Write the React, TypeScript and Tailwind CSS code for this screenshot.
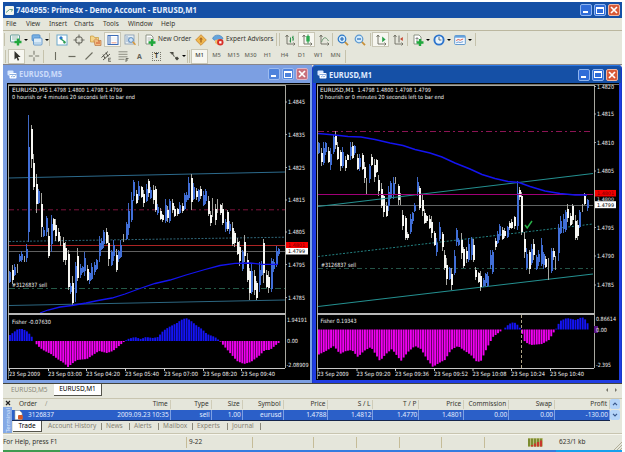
import type { ReactNode } from "react";

type Point = [number, number];
// x, high, low, kind: w = white body, b = blue body, g = wick only
type Bar = [number, number, number, "w" | "b" | "g"];

const M5_BARS: Bar[] = [
  [9.5, 271, 283, "b"], [12, 265, 284, "w"], [14, 264, 276, "b"], [17, 264, 273, "g"], [19, 254, 262, "b"], [21.5, 251, 262, "b"],
  [24, 256, 262, "g"], [26.5, 244, 262, "b"], [28.7, 115, 242, "b"], [31.3, 125, 168, "w"], [33.5, 154, 190, "w"], [36, 174, 213, "w"],
  [38.5, 189, 204, "b"], [41, 193, 237, "w"], [43.5, 227, 237, "b"], [46, 216, 236, "b"], [48.5, 228, 258, "w"], [51, 215, 252, "b"],
  [53, 218, 231, "w"], [55.5, 219, 241, "w"], [58, 228, 242, "w"], [60.5, 236, 246, "g"], [63, 237, 262, "w"], [65.5, 242, 265, "w"],
  [68, 250, 290, "w"], [70.5, 283, 294, "b"], [72.5, 276, 305, "w"], [75, 262, 302, "b"], [77.5, 248, 281, "w"], [80, 264, 278, "b"],
  [82.3, 266, 273, "b"], [84.6, 252, 276, "b"], [87, 265, 281, "w"], [89.4, 272, 284, "b"], [91.8, 263, 280, "b"], [94.2, 262, 275, "b"],
  [96.6, 259, 270, "b"], [99, 236, 262, "b"], [101.4, 238, 250, "b"], [103.8, 230, 248, "b"], [106, 228, 244, "w"], [108.6, 235, 266, "w"],
  [111, 250, 266, "b"], [113.5, 240, 261, "b"], [116, 249, 272, "w"], [118.3, 250, 262, "b"], [120.7, 240, 258, "b"], [123.2, 234, 242, "g"],
  [126, 222, 240, "b"], [128.5, 203, 235, "b"], [131, 192, 222, "b"], [133, 180, 201, "b"], [136, 190, 204, "w"], [138.5, 181, 200, "b"],
  [141, 186, 198, "w"], [143.5, 190, 207, "w"], [146, 184, 202, "b"], [148.2, 179, 197, "w"], [150.6, 187, 199, "b"], [153, 185, 204, "w"],
  [155.3, 186, 212, "w"], [157.7, 204, 215, "b"], [160.1, 208, 220, "w"], [162.5, 214, 222, "w"], [165, 199, 223, "b"], [167.3, 206, 222, "w"],
  [169.7, 199, 223, "b"], [172.1, 199, 213, "w"], [174.5, 206, 217, "w"], [177, 208, 216, "w"], [179.5, 202, 214, "b"], [182, 203, 213, "w"],
  [184.3, 193, 210, "b"], [186.7, 192, 202, "b"], [188.9, 177, 200, "b"], [191, 174, 210, "w"], [193.5, 183, 200, "b"], [196, 188, 200, "w"],
  [198.4, 189, 202, "b"], [200.8, 186, 199, "w"], [203.2, 191, 206, "b"], [205.6, 189, 204, "b"], [208, 196, 216, "w"], [210.4, 211, 226, "w"],
  [212.8, 198, 217, "g"], [215.4, 204, 225, "w"], [217.8, 199, 213, "g"], [220.2, 204, 215, "w"], [222.6, 203, 225, "w"], [225, 219, 232, "b"],
  [227.4, 210, 231, "w"], [229.8, 221, 234, "b"], [232.2, 222, 246, "w"], [234.6, 231, 247, "w"], [237, 238, 255, "w"], [239.4, 241, 266, "w"],
  [242, 250, 271, "b"], [244.5, 235, 262, "w"], [247, 253, 282, "w"], [249.4, 268, 300, "w"], [251.8, 263, 294, "b"], [254, 270, 295, "w"],
  [256.5, 281, 300, "w"], [259, 262, 292, "b"], [261.5, 261, 276, "b"], [263.8, 239, 283, "w"], [266.3, 270, 288, "w"], [268.6, 271, 293, "w"],
  [271, 258, 292, "b"], [273.5, 259, 272, "b"], [276, 246, 267, "b"], [278.5, 248, 256, "b"],
];

const M1_BARS: Bar[] = [
  [318.4, 142, 154, "b"], [321, 148, 166, "w"], [323.4, 142, 165, "b"], [325.8, 142, 155, "b"], [328.2, 147, 163, "w"], [330.6, 148, 170, "b"],
  [333, 135, 154, "b"], [335.3, 131, 149, "w"], [337.7, 142, 160, "w"], [340, 150, 171, "w"], [342.5, 147, 168, "b"], [345, 156, 171, "w"],
  [347.5, 154, 160, "w"], [350, 142, 160, "b"], [352.4, 142, 159, "w"], [354.8, 145, 155, "b"], [357.2, 154, 170, "w"], [359.6, 154, 171, "b"],
  [362, 153, 170, "w"], [364.4, 162, 183, "w"], [366.6, 178, 194, "g"], [369.2, 164, 183, "b"], [371.5, 154, 166, "w"], [374, 159, 182, "w"],
  [376.4, 159, 173, "w"], [378.8, 175, 196, "w"], [381.2, 183, 208, "w"], [383.6, 194, 217, "w"], [386, 202, 217, "w"], [388.5, 186, 211, "b"],
  [390.9, 181, 199, "b"], [393.3, 177, 199, "b"], [395.7, 177, 184, "g"], [398.1, 184, 205, "w"], [400.5, 193, 205, "g"], [402.8, 210, 230, "w"],
  [405.2, 216, 240, "w"], [407.6, 232, 240, "w"], [410, 214, 234, "b"], [412.4, 212, 224, "b"], [414.8, 203, 212, "b"], [417.2, 177, 196, "b"],
  [419.6, 186, 210, "w"], [422, 194, 216, "w"], [424.4, 209, 224, "w"], [426.8, 215, 223, "w"], [429.2, 215, 229, "w"], [431.6, 216, 238, "w"],
  [434, 231, 246, "w"], [436.6, 238, 256, "b"], [439.5, 222, 241, "b"], [442, 232, 251, "w"], [444.4, 250, 270, "w"], [446.8, 258, 285, "w"],
  [449.2, 267, 280, "b"], [451.5, 268, 290, "w"], [454, 250, 275, "b"], [456.5, 228, 246, "b"], [458.8, 238, 246, "b"], [461.3, 233, 259, "w"],
  [463.7, 247, 268, "w"], [466.1, 247, 263, "w"], [468.5, 238, 262, "b"], [471, 237, 260, "b"], [473.4, 239, 262, "w"], [475.8, 267, 280, "w"],
  [478.2, 272, 283, "w"], [480.6, 271, 291, "w"], [483, 278, 287, "b"], [485.4, 273, 286, "b"], [487.8, 272, 287, "b"], [490.2, 250, 269, "b"],
  [492.5, 250, 274, "b"], [495, 238, 250, "w"], [497.4, 231, 244, "b"], [499.8, 224, 240, "b"], [502.2, 227, 240, "w"], [504.6, 228, 238, "w"],
  [507, 226, 238, "b"], [509.4, 221, 230, "w"], [511.8, 219, 229, "w"], [514.2, 216, 229, "w"], [517, 181, 230, "b"], [519.4, 187, 200, "w"],
  [521.7, 192, 235, "w"], [524.2, 232, 258, "w"], [526.6, 248, 270, "b"], [529, 250, 274, "w"], [531.4, 244, 265, "b"], [533.8, 239, 260, "w"],
  [536.2, 255, 270, "b"], [538.6, 250, 266, "b"], [541, 238, 266, "b"], [543.4, 252, 269, "b"], [545.8, 256, 268, "w"], [548.2, 258, 280, "g"],
  [551, 248, 273, "b"], [553.4, 248, 260, "w"], [555.8, 256, 270, "g"], [558.2, 224, 261, "b"], [560.6, 216, 234, "b"], [563, 214, 233, "b"],
  [565.4, 210, 232, "b"], [567.8, 204, 222, "w"], [570.2, 213, 226, "w"], [572.6, 204, 224, "w"], [575, 215, 240, "w"], [577.4, 220, 240, "w"],
  [579.8, 210, 228, "b"], [582.4, 204, 212, "g"], [584.6, 193, 205, "w"], [587, 199, 211, "b"],
];

function Candles({ bars }: { bars: Bar[] }) {
  return (
    <g shapeRendering="crispEdges">
      {bars.map(([x, high, low, kind], i) => {
        const len = low - high;
        const up = len * (i % 3 === 0 ? 0.1 : 0.25);
        const down = len * (i % 2 === 0 ? 0.08 : 0.22);
        const left = Math.round(x - 0.5);
        return (
          <g key={x}>
            <rect x={left} y={high} width="1" height={len} fill={kind === "b" ? "#3f68c4" : "#a6a6a0"} />
            {kind !== "g" && (
              <rect x={left} y={high + up} width="2" height={len - up - down} fill={kind === "b" ? "#416fd8" : "#f6f6f2"} />
            )}
          </g>
        );
      })}
    </g>
  );
}

function valueAt(points: Point[], x: number) {
  for (let i = 1; i < points.length; i++) {
    const [x0, y0] = points[i - 1];
    const [x1, y1] = points[i];
    if (x >= x0 && x <= x1) return y0 + ((y1 - y0) * (x - x0)) / (x1 - x0);
  }
  return null;
}

function Histogram({ points, zero, from, to }: { points: Point[]; zero: number; from: number; to: number }) {
  const bars: ReactNode[] = [];
  for (let x = from; x <= to; x += 2.42) {
    const y = valueAt(points, x);
    if (y === null || Math.abs(y - zero) < 0.5) continue;
    const up = y < zero;
    bars.push(
      <rect key={x} x={x} y={up ? y : zero} width="1.9" height={Math.abs(y - zero)} fill={up ? "#1414f5" : "#f000f0"} />,
    );
  }
  return <g>{bars}</g>;
}

function Label({ x, y, w, fill = "#f2f2f2", size = 5.7, children }: { x: number; y: number; w: number; fill?: string; size?: number; children: string }) {
  return (
    <text x={x} y={y + 2} textLength={w} lengthAdjust="spacingAndGlyphs" fill={fill} fontSize={size}>
      {children}
    </text>
  );
}

function toPath(points: Point[]) {
  return points.map((p) => p.join(",")).join(" ");
}

function Frame({ left, right, times }: { left: number; right: number; times: [number, string][] }) {
  return (
    <>
      <g shapeRendering="crispEdges">
        <path d={`M${left - 1} 379V84.5H${left + 302}`} fill="none" stroke="#77756c" />
        <path d={`M${left} 85.5H${right}V368`} fill="none" stroke="#a8a8a0" />
        <path d={`M${left - 0.5} 85V368.5`} stroke="#a8a8a0" />
        <rect x={left - 1} y="313" width={right - left + 1} height="2" fill="#b8b8b8" />
        <path d={`M${left - 1} 368.5H${right}`} stroke="#c8c8c8" />
      </g>
      {times.map(([x, label], i) => (
        <g key={label}>
          <path d={`M${x + 0.5} 368v3`} stroke="#c8c8c8" />
          <Label x={x} y={374} w={i === 0 ? 31 : 34}>{label}</Label>
        </g>
      ))}
    </>
  );
}

function PriceAxis({ x, prices }: { x: number; prices: [number, string][] }) {
  return (
    <>
      {prices.map(([y, label]) => (
        <g key={label}>
          <path d={`M${x - 3} ${y}h2`} stroke="#c8c8c8" strokeWidth="0.8" />
          <Label x={x} y={y} w={17}>{label}</Label>
        </g>
      ))}
    </>
  );
}

const M5_FISHER: Point[] = [
  [9, 335], [13, 332], [17, 329], [22, 329], [27, 332], [31, 337], [33, 341], [37, 346], [42, 350], [50, 354], [58, 360], [63, 363], [67, 367],
  [72, 363], [76, 360], [86, 359], [92, 355], [98, 351], [106, 353], [112, 351], [118, 346], [124, 341], [127, 339], [134, 337], [140, 339],
  [145, 337], [152, 338], [157, 337], [162, 331], [168, 327], [176, 323], [180, 320], [185, 318], [189, 320], [195, 325], [201, 329],
  [206, 334], [214, 337], [219, 341], [223, 346], [230, 354], [236, 361], [243, 364], [250, 362], [258, 356], [264, 350], [269, 350], [275, 345], [279, 342],
];

const M1_FISHER: Point[] = [
  [317, 355], [325, 351], [333, 346], [339, 354], [345, 351], [351, 350], [357, 357], [363, 351], [370, 347], [379, 361], [385, 354], [391, 349],
  [400, 361], [407, 352], [414, 346], [420, 349], [426, 359], [432, 367], [438, 363], [444, 360], [450, 350], [457, 346], [464, 351], [470, 355],
  [476, 362], [480, 361], [486, 348], [492, 337], [500, 331], [503, 329], [508, 324], [513, 322], [518, 326], [520, 330], [524, 342], [530, 345], [541, 344],
  [548, 340], [553, 332], [555, 329], [559, 321], [566, 318], [575, 320], [581, 317], [585, 320], [588, 326],
];

const CHART_FONT = "font-['DejaVu_Sans_Condensed','DejaVu_Sans',sans-serif]";

function M5Chart() {
  return (
    <svg viewBox="7 83 303 297" className={"block h-[297px] w-[303px] bg-black " + CHART_FONT}>
      <Label x={12} y={90} w={36}>EURUSD,M5</Label>
      <Label x={49} y={90} w={73}>1.4798 1.4800 1.4798 1.4799</Label>
      <Label x={12} y={96.5} w={123}>0 hourish or 4 minutes 20 seconds left to bar end</Label>
      <path d="M9 178L285 172" stroke="#2c6a8c" />
      <path d="M9 209.8H285" stroke="#7c123c" strokeDasharray="5 3 2 3" />
      <path d="M9 241.5L285 237.2" stroke="#2f6678" strokeDasharray="2 1.5" />
      <path d="M9 245.5H285" stroke="#ac2424" shapeRendering="crispEdges" />
      <path d="M9 251.5H285" stroke="#606060" shapeRendering="crispEdges" />
      <path d="M9 288.5H285" stroke="#245a48" strokeDasharray="6 3 2 3" />
      <path d="M9 305.5L285 300" stroke="#2c6680" />
      <Candles bars={M5_BARS} />
      <Label x={12} y={284.5} w={35}>#3126837 sell</Label>
      <polyline
        points={toPath([[40, 313], [48, 310], [60, 307], [72, 305.5], [86, 303], [98, 300.5], [112, 298], [125, 294], [140, 288.5], [155, 283.5], [170, 280], [186, 275], [205, 269.5], [220, 265.5], [235, 263.3], [250, 263], [262, 264.3], [278, 264.3]])}
        fill="none" stroke="#1414f0" strokeWidth="1.3"
      />
      <Frame
        left={9} right={285}
        times={[[9, "23 Sep 2009"], [48, "23 Sep 03:00"], [86, "23 Sep 04:20"], [125, "23 Sep 05:40"], [164, "23 Sep 07:00"], [203, "23 Sep 08:20"], [241, "23 Sep 09:40"]]}
      />
      <Label x={12} y={321.5} w={39}>Fisher -0.07630</Label>
      <Histogram points={M5_FISHER} zero={341} from={9} to={279} />
      <PriceAxis x={288} prices={[[102, "1.4845"], [134.5, "1.4835"], [167.5, "1.4825"], [200, "1.4815"], [232, "1.4805"], [264.5, "1.4795"], [297.5, "1.4785"]]} />
      <rect x="286" y="242" width="22" height="6" fill="#f40000" />
      <Label x={288} y={244.6} w={17} size={5.2} fill="#700000">1.4801</Label>
      <rect x="286" y="248" width="22" height="6.5" fill="#fff" />
      <Label x={288} y={251.2} w={17} size={5.2} fill="#000">1.4799</Label>
      <Label x={287} y={320} w={20}>1.94191</Label>
      <Label x={287} y={341} w={11}>0.00</Label>
      <Label x={286.5} y={364.5} w={22}>-2.08909</Label>
    </svg>
  );
}

function M1Chart() {
  return (
    <svg viewBox="316 83 303 297" className={"block h-[297px] w-[303px] bg-black " + CHART_FONT}>
      <Label x={320} y={90} w={34}>EURUSD,M1</Label>
      <Label x={357.5} y={90} w={73.5}>1.4798 1.4800 1.4798 1.4799</Label>
      <Label x={320} y={96.5} w={124}>0 hourish or 0 minutes 20 seconds left to bar end</Label>
      <path d="M318 131.5H593" stroke="#8c1454" strokeDasharray="6 3 2 3" />
      <path d="M318 205.5H593" stroke="#606464" shapeRendering="crispEdges" />
      <path d="M318 256.5L593 224" stroke="#238080" strokeDasharray="2 1.6" />
      <path d="M318 268.5H593" stroke="#245448" strokeDasharray="5 3 2 3" />
      <path d="M318 306.5L593 274" stroke="#249090" strokeWidth="1.1" />
      <Candles bars={M1_BARS} />
      <path d="M318 206.5L593 173.5" stroke="#249090" strokeWidth="1.1" />
      <path d="M318 194.5H593" stroke="#a00078" shapeRendering="crispEdges" />
      <Label x={321} y={264.5} w={35}>#3126837 sell</Label>
      <polyline
        points={toPath([[318, 133.5], [335, 135], [348, 136.5], [361, 137], [375, 139.5], [390, 143], [403, 145.5], [415, 149.5], [430, 153], [442, 157], [455, 163], [470, 169], [482, 174.5], [495, 178.5], [508, 181.5], [519, 182.5], [530, 186.5], [545, 191], [560, 193.5], [575, 195], [587, 195]])}
        fill="none" stroke="#1414f0" strokeWidth="1.5"
      />
      <path d="M525 225l2.2 3l4.8-7" fill="none" stroke="#28b048" strokeWidth="1.5" />
      <Frame
        left={318} right={594}
        times={[[317.5, "23 Sep 2009"], [356.5, "23 Sep 09:20"], [395, "23 Sep 09:36"], [434, "23 Sep 09:52"], [472.5, "23 Sep 10:08"], [511, "23 Sep 10:24"], [550, "23 Sep 10:40"]]}
      />
      <Label x={320.5} y={321} w={36}>Fisher 0.19343</Label>
      <Histogram points={M1_FISHER} zero={329.5} from={318} to={588} />
      <path d="M521.5 315V368" stroke="#b0a488" strokeDasharray="3 2" />
      <PriceAxis x={597} prices={[[86.5, "1.4820"], [114, "1.4815"], [142.5, "1.4810"], [171, "1.4805"], [227.5, "1.4795"], [256, "1.4790"], [285, "1.4785"]]} />
      <rect x="595" y="190" width="21" height="6.5" fill="#f40000" />
      <Label x={597} y={192.8} w={17} size={4.8} fill="#700000">1.4801</Label>
      <Label x={597} y={198.8} w={17} size={4.8}>1.4800</Label>
      <rect x="595" y="201.2" width="21" height="7" fill="#fff" />
      <Label x={597} y={204.8} w={17} size={5} fill="#000">1.4799</Label>
      <Label x={596} y={319} w={20}>0.86614</Label>
      <rect x="594" y="326" width="4" height="7" fill="#5a1480" />
      <Label x={596} y={329.5} w={11}>0.00</Label>
      <Label x={596} y={364.8} w={15}>-2.395</Label>
    </svg>
  );
}

function WindowButtons({ faded = false }: { faded?: boolean }) {
  const blue = faded ? "bg-[#4f83dc] border-[#9dbcf0]" : "bg-[#2f6cd8] border-[#8fb4ee]";
  const red = faded ? "bg-[#c8707c] border-[#dcb4c8]" : "bg-[#d85a38] border-[#f0b8a4]";
  return (
    <div className="flex gap-[2px]">
      <span className={"flex h-3 w-3 items-end rounded-[2px] border p-[2px] " + blue}>
        <span className="h-[2px] w-[5px] bg-white" />
      </span>
      <span className={"flex h-3 w-3 items-center justify-center rounded-[2px] border " + blue}>
        <span className="h-[7px] w-[8px] border border-t-2 border-white" />
      </span>
      <span className={"flex h-3 w-3 items-center justify-center rounded-[2px] border " + red}>
        <svg viewBox="0 0 8 8" className="h-2 w-2"><path d="M1 1l6 6M7 1L1 7" stroke="#fff" strokeWidth="1.7" /></svg>
      </span>
    </div>
  );
}

function ChartIcon() {
  return (
    <svg viewBox="0 0 10 9" className="h-[9px] w-[10px]">
      <rect x="0.5" y="0.5" width="6" height="5" rx="1" fill="#d8e8ff" />
      <rect x="2.5" y="3" width="7" height="5.5" rx="0.8" fill="#fff" />
      <path d="M2.5 4.5h7M4 7l1.5-1l1.5 1l1.5-1.4" fill="none" stroke="#6f9bd8" strokeWidth="0.8" />
    </svg>
  );
}

type IconName =
  | "newChart" | "profiles" | "market" | "target" | "folder" | "terminal" | "tester" | "order" | "diamond" | "expert"
  | "bars" | "candles" | "line" | "zoomIn" | "zoomOut" | "scroll" | "shift" | "indicator" | "clock" | "template"
  | "cursor" | "cross" | "vline" | "hline" | "trend" | "channel" | "fibo" | "arrows";

const SHEET = <path d="M2 1h5l2 2v7H2z" fill="#fff" stroke="#777d70" strokeWidth="0.8" />;
const AXES = <path d="M3 1v9h8M1.5 3L3 1l1.5 2M9.5 8.5L11 10l-1.5 1.5" fill="none" stroke="#6c6c60" strokeWidth="0.9" />;

const ICONS: Record<IconName, ReactNode> = {
  newChart: (
    <>
      <rect x="0.5" y="1" width="9" height="7" rx="1" fill="#f4faff" stroke="#639a96" />
      <path d="M2 5h5M2 3h6" stroke="#76a088" strokeWidth="0.7" />
      <path d="M8 4.5v7M4.5 8h7" stroke="#20a83c" strokeWidth="2.4" />
    </>
  ),
  profiles: (
    <>
      <rect x="1" y="0.8" width="8" height="6" rx="1" fill="#78b0e4" stroke="#4a88c8" strokeWidth="0.8" />
      <rect x="2.5" y="4" width="8.5" height="7" rx="1" fill="#dcecf8" stroke="#4a88c8" strokeWidth="0.8" />
      <path d="M3 9h7" stroke="#9cc0dc" />
    </>
  ),
  market: (
    <>
      <rect x="1" y="1" width="10" height="10" fill="#fff" stroke="#6ca8cc" />
      <path d="M3 4l2-2l2 2l-2 2z" fill="#2878d0" />
      <path d="M5 5l4 3" stroke="#30a060" strokeWidth="1.5" />
      <path d="M7 8l2-1l1 2l-2 .7z" fill="#2c9c50" />
    </>
  ),
  target: (
    <>
      <circle cx="6" cy="6" r="3.3" fill="none" stroke="#6d6d64" strokeWidth="1.1" />
      <path d="M6 0.5v3.7M6 7.8v3.7M0.5 6h3.7M7.8 6h3.7" stroke="#6d6d64" strokeWidth="1.1" />
    </>
  ),
  folder: (
    <>
      <path d="M0.5 2h3l1 1.5h4V8h-8z" fill="#f4d488" stroke="#c89838" strokeWidth="0.7" />
      <path d="M4 6.5l2-2l2 2h3v5H5z" fill="#f0bc80" stroke="#bc7444" strokeWidth="0.7" />
      <path d="M7 8v2M9 7v3" stroke="#d05830" />
    </>
  ),
  terminal: (
    <>
      <rect x="1" y="1.5" width="10" height="9" fill="#fff" stroke="#3c6cb8" />
      <path d="M3 2v8" stroke="#3c6cb8" />
      <path d="M4 4h6M4 6h6" stroke="#dce4ec" strokeWidth="0.7" />
      <path d="M4.5 8.8h5" stroke="#e08068" strokeWidth="0.8" />
    </>
  ),
  tester: (
    <>
      <rect x="1" y="1" width="9" height="9" fill="#e8f0f4" stroke="#8498b0" strokeWidth="0.8" />
      <path d="M3 2v6M5 3v6" stroke="#7090b8" strokeWidth="0.7" />
      <circle cx="7" cy="6" r="2.4" fill="#cfe4f8" stroke="#4c80b8" strokeWidth="0.9" />
      <path d="M8.7 7.8l2.8 3" stroke="#d89838" strokeWidth="1.6" />
    </>
  ),
  order: (
    <>
      {SHEET}
      <path d="M3.5 4h4M3.5 6h3" stroke="#8c9488" strokeWidth="0.7" />
      <path d="M8 5v7M4.5 8.5h7" stroke="#20a83c" strokeWidth="2.3" />
    </>
  ),
  diamond: (
    <>
      <path d="M6 0.7L11.3 6L6 11.3L0.7 6z" fill="#f0b850" stroke="#c8842c" strokeWidth="0.8" />
      <path d="M6 3.2L8 5.6L6.7 5.6V8.6H5.3V5.6L4 5.6z" fill="#a86820" />
    </>
  ),
  expert: (
    <>
      <path d="M0.6 4.8C1 2 4 0.8 6.5 1.2S10.8 3 11 4.8L8 6L3 6.6z" fill="#64a4dc" stroke="#3c7cb8" strokeWidth="0.6" />
      <path d="M3 6v3l3 2l2-3V5z" fill="#edbf70" />
      <circle cx="8.3" cy="8.3" r="3.2" fill="#d83028" />
      <rect x="7.2" y="7.2" width="2.3" height="2.3" fill="#fff" />
    </>
  ),
  bars: (
    <>
      {AXES}
      <path d="M6.5 3.5v5M9 1.8v5M5.5 7h1M8 3.5h1M9 5h1" stroke="#289048" />
    </>
  ),
  candles: (
    <>
      {AXES}
      <path d="M7 0.5v9" stroke="#208c40" />
      <rect x="5.3" y="2" width="3.4" height="5.5" fill="#2cac50" />
    </>
  ),
  line: (
    <>
      {AXES}
      <path d="M3.5 8c2-5 4-6 7-1" fill="none" stroke="#6a9870" />
    </>
  ),
  zoomIn: (
    <>
      <path d="M7.5 7.5l3.5 3.7" stroke="#c89038" strokeWidth="1.8" />
      <circle cx="5" cy="5" r="3.8" fill="#d4ecfc" stroke="#2c78c8" strokeWidth="1.2" />
      <path d="M5 3v4M3 5h4" stroke="#2468b8" strokeWidth="1.2" />
    </>
  ),
  zoomOut: (
    <>
      <path d="M7.5 7.5l3.5 3.7" stroke="#c89038" strokeWidth="1.8" />
      <circle cx="5" cy="5" r="3.8" fill="#d4ecfc" stroke="#5c98d0" strokeWidth="1.2" />
      <path d="M3 5h4" stroke="#2468b8" strokeWidth="1.2" />
    </>
  ),
  scroll: (
    <>
      {AXES}
      <path d="M7.2 2.6l3.4 2.8l-3.4 2.8z" fill="#28a048" />
    </>
  ),
  shift: (
    <>
      {AXES}
      <path d="M7 1.5v7" stroke="#707068" />
      <path d="M10.8 3L8 5l2.8 2z" fill="#c84830" />
    </>
  ),
  indicator: (
    <>
      {SHEET}
      <path d="M3.5 4.5h3M5 3v5" stroke="#777" strokeWidth="0.8" />
      <path d="M8 5v7M4.5 8.5h7" stroke="#20a83c" strokeWidth="2.4" />
    </>
  ),
  clock: (
    <>
      <circle cx="6" cy="6" r="4.6" fill="#e8f4fc" stroke="#2c74cc" strokeWidth="1.9" />
      <path d="M6 3v3h2.4" fill="none" stroke="#50606c" strokeWidth="0.9" />
    </>
  ),
  template: (
    <>
      <rect x="0.7" y="1.5" width="10.6" height="9" rx="0.8" fill="#f4faff" stroke="#5490cc" strokeWidth="0.9" />
      <path d="M1 2.7h10" stroke="#64a0dc" strokeWidth="2" />
      <path d="M2.2 6.5l2-1l2 .7l3-1.2" fill="none" stroke="#d04c40" strokeWidth="0.9" />
      <path d="M2.2 8.8l2-.8l2 .5l3-.8" fill="none" stroke="#4c84c8" strokeWidth="0.8" />
    </>
  ),
  cursor: <path d="M3.5 1v8.5l2-1.8l1.3 3l1.4-.6l-1.3-3h2.7z" fill="#33332e" />,
  cross: <path d="M6 0.8v4M6 7.2v4M0.8 6h4M7.2 6h4" stroke="#7c7c70" strokeWidth="1.1" />,
  vline: <path d="M6.5 2v8" stroke="#6c6c60" strokeWidth="1.1" />,
  hline: <path d="M2.5 6.5h7" stroke="#6c6c60" strokeWidth="1.2" />,
  trend: <path d="M2.5 9.5l7-7" stroke="#6c6c60" strokeWidth="1.1" />,
  channel: (
    <>
      <path d="M1.5 7.5L8 1.5M3 10l7-6M3 4.5l2 4M6 2.5l2 4" stroke="#55554c" strokeWidth="1" />
      <path d="M8.5 8.2h2.5M8.5 9.8h2M8.5 11.4h2.5M8.6 8v3.5" stroke="#55554c" strokeWidth="0.7" />
    </>
  ),
  fibo: (
    <>
      <path d="M1.5 1.8h9M1.5 4.3h9M1.5 6.8h9M1.5 9.3h6" stroke="#77776c" strokeWidth="0.8" />
      <path d="M9 12V8.5h2.5M9 10h2" fill="none" stroke="#55554c" strokeWidth="0.8" />
    </>
  ),
  arrows: (
    <>
      <path d="M1.5 2h4v3.5z" fill="#44443c" />
      <path d="M3 3l5 5" stroke="#66665c" strokeWidth="1.1" strokeDasharray="2 1" />
      <path d="M7 8.5l2-2l2 2l-2 2z" fill="#44443c" />
    </>
  ),
};

function Icon({ name }: { name: IconName }) {
  return <svg viewBox="0 0 12 12" className="h-3 w-3 shrink-0">{ICONS[name]}</svg>;
}

function Tool({ name, active = false }: { name: IconName; active?: boolean }) {
  return (
    <span className={"flex h-[15px] w-[17px] shrink-0 items-center justify-center " + (active ? "border border-[#c9c7b6] bg-[#f7f7f1]" : "")}>
      <Icon name={name} />
    </span>
  );
}

function Arrow() {
  return (
    <span className="flex w-1 shrink-0 items-center justify-center">
      <span className="border-x-2 border-t-2 border-x-transparent border-t-black" />
    </span>
  );
}

function Sep({ className }: { className: string }) {
  return <span className={"h-[13px] w-px shrink-0 bg-[#c5c2ac] " + className} />;
}

const MENU: [string, string][] = [
  ["File", "w-[20px]"], ["View", "w-[23px]"], ["Insert", "w-[25px]"], ["Charts", "w-[29px]"], ["Tools", "w-[25px]"], ["Window", "w-[33px]"], ["Help", "w-[20px]"],
];

const PERIODS = ["M1", "M5", "M15", "M30", "H1", "H4", "D1", "W1", "MN"];

const COLUMNS: [string, string, string][] = [
  ["Time", "2009.09.23 10:35", "w-[101px]"],
  ["Type", "sell", "w-[41px]"],
  ["Size", "1.00", "w-[31px]"],
  ["Symbol", "eurusd", "w-[41px]"],
  ["Price", "1.4788", "w-[45px]"],
  ["S / L", "1.4812", "w-[45px]"],
  ["T / P", "1.4770", "w-[46px]"],
  ["Price", "1.4801", "w-[45px]"],
  ["Commission", "0.00", "w-[45px]"],
  ["Swap", "0.00", "w-[46px]"],
  ["Profit", "-130.00", "w-[55px]"],
];

const TERMINAL_TABS: [string, string][] = [
  ["Account History", "w-[58px]"], ["News", "w-[28px]"], ["Alerts", "w-[29px]"], ["Mailbox", "w-[34px]"], ["Experts", "w-[35px]"], ["Journal", "w-[33px]"],
];

const STATUS_CELLS = ["w-[66px] pl-[2px]", "w-[61px]", "w-[43px]", "w-[43px]", "w-[42px]", "w-[43px]", "w-[40px]"];

export default function App() {
  return (
    <div className="h-[452px] w-[625px] overflow-hidden bg-white pl-[3px] pt-[2px] font-['Noto_Sans','Open_Sans',sans-serif] text-[6.5px] leading-none text-[#35352f]">
      <div className="flex h-[450px] w-[619px] flex-col whitespace-nowrap bg-[#e5e6db]">
        {/* Title bar */}
        <div className="flex h-4 shrink-0 items-center bg-[#1550a6] pl-[2px] pr-[2px]">
          <svg viewBox="0 0 10 9" className="h-[9px] w-[10px]">
            <rect width="9" height="9" rx="1" fill="#f4f6ee" />
            <path d="M1 6.5l3.5-3h3l-1 2" fill="none" stroke="#5d9c84" />
          </svg>
          <svg viewBox="0 0 190 16" className="ml-[1px] h-4 w-[190px] text-[8.6px] font-bold">
            <text x="0" y="11.2" textLength="181" lengthAdjust="spacingAndGlyphs" fill="#e6eefc">7404955: Prime4x - Demo Account - EURUSD,M1</text>
          </svg>
          <div className="ml-auto"><WindowButtons /></div>
        </div>

        {/* Menu */}
        <div className="flex h-3 shrink-0 items-center pl-[3px]">
          {MENU.map(([label, width]) => (
            <span key={label} className={width}>{label}</span>
          ))}
        </div>

        {/* Standard toolbar */}
        <div className="flex h-[18px] shrink-0 items-center border-t border-[#bbb79f]">
          <Sep className="ml-px mr-[2px]" />
          <Tool name="newChart" /><Arrow />
          <Tool name="profiles" /><Arrow />
          <Sep className="mr-[3px]" />
          <Tool name="market" /><Tool name="target" /><Tool name="folder" /><Tool name="terminal" active /><Tool name="tester" />
          <Sep className="mr-[2px]" />
          <Tool name="order" />
          <span className="w-[34px]">New Order</span>
          <Tool name="diamond" /><Tool name="expert" />
          <span className="w-[50px]">Expert Advisors</span>
          <Sep className="mr-[2px]" />
          <Sep className="mr-px" />
          <Tool name="bars" /><Tool name="candles" active /><Tool name="line" />
          <Sep className="mr-px" />
          <Tool name="zoomIn" /><Tool name="zoomOut" />
          <Sep className="ml-[2px] mr-px" />
          <Tool name="scroll" active /><Tool name="shift" />
          <Sep className="ml-px mr-px" />
          <Tool name="indicator" /><Arrow />
          <Tool name="clock" /><Arrow />
          <Tool name="template" /><Arrow />
          <Sep className="ml-[3px]" />
        </div>

        {/* Drawing tools and periods */}
        <div className="flex h-4 shrink-0 items-center">
          <Sep className="ml-[2px] mr-[2px]" />
          <Tool name="cursor" active /><Tool name="cross" />
          <Sep className="ml-px mr-[2px]" />
          <Tool name="vline" /><Tool name="hline" /><Tool name="trend" /><Tool name="channel" /><Tool name="fibo" />
          <span className="w-[17px] text-center text-[7px] font-bold text-[#62625a]">A</span>
          <span className="m-[4px] flex h-[9px] w-[9px] items-center justify-center border border-dotted border-[#77776c] text-[6.5px] font-bold">T</span>
          <Tool name="arrows" /><Arrow />
          <Sep className="ml-px mr-px" />
          <Sep className="mr-px" />
          {PERIODS.map((period) => (
            <span
              key={period}
              className={
                "flex h-[15px] w-[17px] items-center justify-center text-[5.8px] font-medium " +
                (period === "M1" ? "border border-[#c9c7b6] bg-[#f7f7f1] text-[#3c3c34]" : "text-[#66665c]")
              }
            >
              {period}
            </span>
          ))}
          <Sep className="ml-px" />
        </div>

        {/* Chart windows */}
        <div className="flex h-[319px] shrink-0 border-t border-[#87858a]">
          <section className="h-[318px] w-[309px] bg-[#7c9fe2] pl-[4px] pr-[2px]">
            <div className="flex h-[18px] items-center pr-[2px]">
              <ChartIcon />
              <svg viewBox="0 0 48 16" className="ml-[2px] h-4 w-12 text-[8.4px] font-bold">
                <text x="0" y="11" textLength="43" lengthAdjust="spacingAndGlyphs" fill="#ccdcfa">EURUSD,M5</text>
              </svg>
              <div className="ml-auto"><WindowButtons faded /></div>
            </div>
            <M5Chart />
          </section>
          <section className="h-[318px] w-[310px] rounded-t-[4px] border-x border-[#1738c8] bg-[#203de2] pl-[3px]">
            <div className="-ml-[3px] flex h-[18px] items-center rounded-t-[3px] border-t border-[#2d7ae6] bg-[#1550a6] pl-[4px] pr-[3px]">
              <ChartIcon />
              <svg viewBox="0 0 48 16" className="ml-[2px] h-4 w-12 text-[8.4px] font-bold">
                <text x="0" y="11" textLength="43" lengthAdjust="spacingAndGlyphs" fill="#e0ecff">EURUSD,M1</text>
              </svg>
              <div className="ml-auto"><WindowButtons /></div>
            </div>
            <M1Chart />
          </section>
        </div>

        {/* Chart tabs */}
        <div className="flex h-[15px] shrink-0 items-start border-t border-[#44443c]">
          <span className="flex h-3 w-[51px] items-center pl-[8px] text-[#8c8a7c]">EURUSD,M5</span>
          <span className="flex h-[12px] w-[48px] items-center justify-center border-b border-r border-[#55554c] bg-white text-black">EURUSD,M1</span>
          <span className="ml-auto mr-[5px] mt-[4px] flex gap-[7px]">
            <span className="border-y-2 border-r-2 border-y-transparent border-r-[#77756a]" />
            <span className="border-y-2 border-l-2 border-y-transparent border-l-[#77756a]" />
          </span>
        </div>

        {/* Terminal */}
        <div className="flex h-[36px] shrink-0 border-b border-t border-[#c8c5b0]">
          <div className="flex w-[9px] shrink-0 flex-col items-center">
            <svg viewBox="0 0 6 6" className="mt-px h-[6px] w-[6px] shrink-0"><path d="M1 1l4 4M5 1L1 5" stroke="#222" strokeWidth="1.2" /></svg>
            <div className="mt-px flex h-[26px] w-[9px] items-center justify-center bg-[#85a9e4]">
              <span className="rotate-180 text-[6px] text-[#dbe8ff] [writing-mode:vertical-rl]">Terminal</span>
            </div>
          </div>
          <div className="flex min-w-0 flex-1 flex-col">
            <div className="flex h-[22px]">
              <div className="w-[598px]">
                <div className="flex h-[11px] items-center">
                  <span className="flex w-[58px] pl-[7px]">
                    Order
                    <span className="ml-[8px] text-[#99978a]">/</span>
                  </span>
                  {COLUMNS.map(([label, , width], i) => (
                    <span key={i} className={"flex h-[9px] items-center justify-end border-r border-[#cfccb8] pr-[2px] " + width}>{label}</span>
                  ))}
                </div>
                <div className="flex h-[11px] items-center border-b border-[#15264c] bg-[#2b5fc8] text-[#e2ecff]">
                  <span className="flex w-[58px] items-center pl-[2px]">
                    <svg viewBox="0 0 10 10" className="mr-[4px] h-[10px] w-[10px] shrink-0">
                      <path d="M1 0.5h4.5L8 3v6.5H1z" fill="#fff" stroke="#a8a898" strokeWidth="0.6" />
                      <rect x="4" y="5" width="4.8" height="4.5" rx="1" fill="#d45828" />
                    </svg>
                    3126837
                  </span>
                  {COLUMNS.map(([, value, width], i) => (
                    <span key={i} className={"flex h-[10px] items-center justify-end border-r border-[#7ba0e4] pr-px " + width}>{value}</span>
                  ))}
                </div>
              </div>
              <div className="flex w-[10px] flex-col gap-px">
                <span className="flex h-[10px] items-center justify-center rounded-[2px] bg-[#b4d4f8]">
                  <svg viewBox="0 0 6 4" className="h-1 w-1.5"><path d="M1 3.2l2-2l2 2" fill="none" stroke="#38588c" strokeWidth="1.2" /></svg>
                </span>
                <span className="flex h-[10px] items-center justify-center rounded-[2px] bg-[#b4d4f8]">
                  <svg viewBox="0 0 6 4" className="h-1 w-1.5"><path d="M1 0.8l2 2l2-2" fill="none" stroke="#38588c" strokeWidth="1.2" /></svg>
                </span>
              </div>
            </div>
            <div className="flex h-[11px] items-center text-[#858375]">
              <span className="ml-px mr-[6px] flex h-[11px] w-[29px] items-center justify-center border-b border-r border-[#55554c] bg-white text-black">Trade</span>
              {TERMINAL_TABS.map(([label, width]) => (
                <span key={label} className={"flex shrink-0 items-center " + width}>
                  {label}
                  <span className="ml-auto mr-[4px] h-[7px] w-px bg-[#8a887a]" />
                </span>
              ))}
            </div>
          </div>
        </div>

        {/* Status bar */}
        <div className="flex h-[16px] shrink-0 items-center border-t border-[#f6f6ee]">
          <span className="w-[183px]">For Help, press F1</span>
          {STATUS_CELLS.map((cell, i) => (
            <span key={i} className={"flex h-[11px] items-center border-l border-[#c5bc98] " + cell}>{i === 0 ? "9-22" : ""}</span>
          ))}
          <svg viewBox="0 0 15 9" className="ml-[4px] mr-[16px] h-[9px] w-[15px] shrink-0">
            <rect width="15" height="8.5" fill="#c8c890" />
            <path d="M1 0.5v8M4 0.5v8M7 0.5v8M10 0.5v8M13 0.5v8" stroke="#7c8c30" strokeWidth="2.2" />
            <path d="M4 7v1.5M7 5.5v3M10 4v4.5M13 2.5v6" stroke="#c8382c" strokeWidth="2.2" />
          </svg>
          <span>623/1 kb</span>
          <svg viewBox="0 0 8 8" className="ml-auto h-2 w-2 self-end">
            <path d="M0 8l8-8M3 8l5-5M6 8l2-2" stroke="#aaa78f" strokeWidth="0.9" />
          </svg>
        </div>

        <div className="flex h-[2px] shrink-0">
          <span className="w-[57px] bg-[#3f9a50]" />
          <span className="flex-1 bg-[#347ce0]" />
          <span className="w-[66px] bg-[#18a0ec]" />
        </div>
      </div>
    </div>
  );
}
